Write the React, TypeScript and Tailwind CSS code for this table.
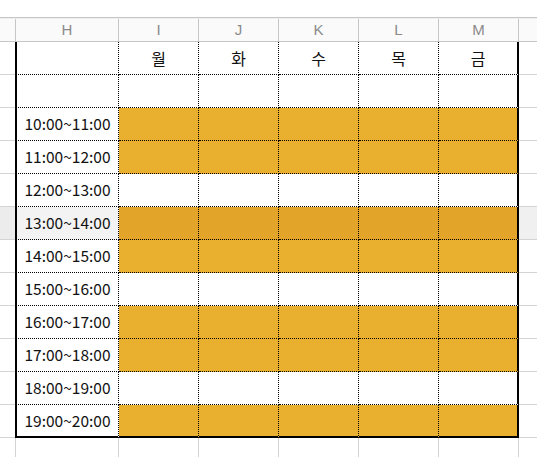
import React from 'react';

const days = ['월', '화', '수', '목', '금'];
const letters = ['I', 'J', 'K', 'L', 'M'];

// 시간표: on = 색칠된 칸
const slots = [
  { time: '10:00~11:00', on: true },
  { time: '11:00~12:00', on: true },
  { time: '12:00~13:00', on: false },
  { time: '13:00~14:00', on: true, selected: true },
  { time: '14:00~15:00', on: true },
  { time: '15:00~16:00', on: false },
  { time: '16:00~17:00', on: true },
  { time: '17:00~18:00', on: true },
  { time: '18:00~19:00', on: false },
  { time: '19:00~20:00', on: true },
];

type RowProps = {
  head?: string;
  cells?: string[];
  fill?: boolean;
  selected?: boolean;
  last?: boolean;
};

const TableRow: React.FC<RowProps> = ({ head, cells, fill, selected, last }) => {
  const bottom = last ? 'border-b-2 [border-bottom-style:solid]' : 'border-b';
  const dayBg = fill ? (selected ? 'bg-[#e3a42a]' : 'bg-[#e9af2e]') : 'bg-white';
  return (
    <div className="flex h-[33px]">
      <div className={`w-[15px] border-b border-[#d4d4d4] ${selected ? 'bg-[#ececec]' : 'bg-white'}`} />
      <div
        className={`w-[104px] flex items-center justify-center text-[15.5px] border-l-2 border-r border-black border-dotted [border-left-style:solid] ${bottom} ${selected ? 'bg-[#f3f3f3]' : 'bg-white'}`}
      >
        {head}
      </div>
      {days.map((d, i) => (
        <div
          key={d}
          className={`w-[80px] flex items-center justify-center border-black border-dotted ${bottom} ${
            i === 4 ? 'border-r-2 [border-right-style:solid]' : 'border-r'
          } ${dayBg}`}
        >
          {cells ? cells[i] : null}
        </div>
      ))}
      <div className={`flex-1 border-b border-[#d4d4d4] ${selected ? 'bg-[#f0f0f0]' : 'bg-white'}`} />
    </div>
  );
};

export default function App() {
  return (
    <div className="w-[537px] h-[457px] overflow-hidden bg-white text-[16px] text-[#111] font-['Noto_Sans_CJK_KR',sans-serif]">
      <div className="h-[17px]" />

      {/* 열 머리글 */}
      <div className="h-[25px] flex flex-col border-t border-b border-[#c6c6c6]">
        <div className="h-[5px] bg-[#eeeeee]" />
        <div className="flex flex-1 bg-[#fafafa] text-[15px] text-[#8a8a8a] font-['Liberation_Sans',sans-serif]">
          <div className="w-[16px] border-r border-[#c6c6c6]" />
          <div className="w-[103px] border-r border-[#c6c6c6] flex items-center justify-center">H</div>
          {letters.map((l) => (
            <div key={l} className="w-[80px] border-r border-[#c6c6c6] flex items-center justify-center">
              {l}
            </div>
          ))}
          <div className="flex-1" />
        </div>
      </div>

      <TableRow cells={days} />
      <TableRow />
      {slots.map((s, i) => (
        <TableRow key={s.time} head={s.time} fill={s.on} selected={s.selected} last={i === slots.length - 1} />
      ))}

      <div className="flex h-[19px]">
        <div className="w-[16px] border-r border-[#d4d4d4]" />
        <div className="w-[103px] border-r border-[#d4d4d4]" />
        {letters.map((l) => (
          <div key={l} className="w-[80px] border-r border-[#d4d4d4]" />
        ))}
        <div className="flex-1" />
      </div>
    </div>
  );
}
